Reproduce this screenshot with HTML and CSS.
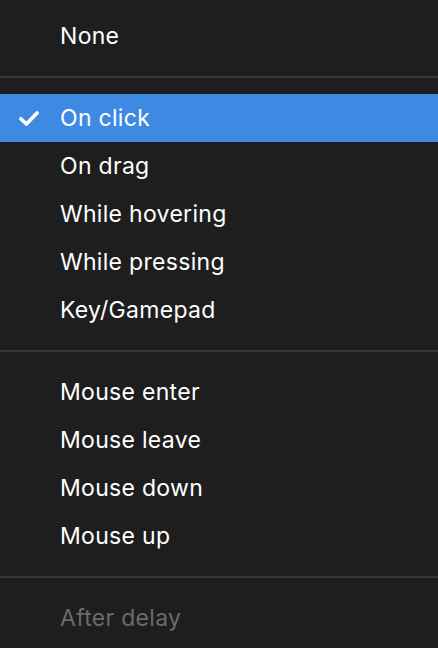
FILE: index.html
```html
<!DOCTYPE html>
<html>
<head>
<meta charset="utf-8">
<link rel="stylesheet" href="styles.css">
</head>
<body>
<div class="menu">
  <div class="group first">
    <div class="item"><span class="label">None</span></div>
  </div>
  <div class="sep"></div>
  <div class="group">
    <div class="item selected">
      <svg class="check" viewBox="0 0 20 15" width="20" height="15"><path d="M2 8 L7.5 13 L18 2" fill="none" stroke="#fff" stroke-width="3.6" stroke-linecap="square"/></svg>
      <span class="label">On click</span>
    </div>
    <div class="item"><span class="label">On drag</span></div>
    <div class="item"><span class="label">While hovering</span></div>
    <div class="item"><span class="label">While pressing</span></div>
    <div class="item"><span class="label">Key/Gamepad</span></div>
  </div>
  <div class="sep"></div>
  <div class="group">
    <div class="item"><span class="label">Mouse enter</span></div>
    <div class="item"><span class="label">Mouse leave</span></div>
    <div class="item"><span class="label">Mouse down</span></div>
    <div class="item"><span class="label">Mouse up</span></div>
  </div>
  <div class="sep"></div>
  <div class="group">
    <div class="item disabled"><span class="label">After delay</span></div>
  </div>
</div>
</body>
</html>
```
FILE: styles.css
```css
html, body {
  margin: 0;
  padding: 0;
  background: #1e1e1e;
}
body {
  font-family: Inter, "Noto Sans", sans-serif;
  color: #ffffff;
  width: 438px;
  height: 648px;
  overflow: hidden;
}
.menu {
  display: flex;
  flex-direction: column;
  padding-top: 12px;
}
.group {
  display: flex;
  flex-direction: column;
  padding: 16px 0;
}
.group.first {
  padding-top: 0;
}
.sep {
  height: 2px;
  background: #383838;
}
.item {
  position: relative;
  height: 48px;
  display: flex;
  align-items: center;
  padding-left: 60px;
  font-size: 23px;
  font-weight: 400;
  letter-spacing: 0.3px;
}
.item.selected {
  background: #3e8ae2;
}
.item.disabled {
  color: #6b6b6b;
}
.check {
  position: absolute;
  left: 19px;
  top: 17px;
}
```
